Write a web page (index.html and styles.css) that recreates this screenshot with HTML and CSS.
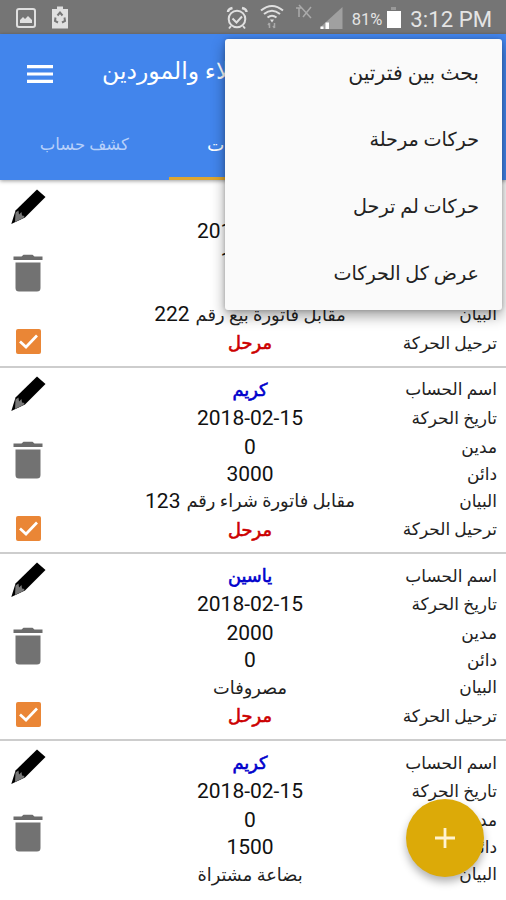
FILE: index.html
```html
<!DOCTYPE html>
<html lang="ar" dir="rtl">
<head>
    <meta charset="UTF-8">
    <meta name="viewport" content="width=device-width, initial-scale=1.0">
    <title>العملاء والموردين</title>
    <link rel="stylesheet" href="styles.css">
</head>
<body>
    <svg class="sprite" width="0" height="0">
        <symbol id="pencil" viewBox="0 0 36 36">
            <path d="M27 0.500l8.500 7.500L15 28.500 1.300 35 5.500 21.500z" fill="#000"/>
            <path d="M5.500 23.500l3-2 .5 4 2.500-2.500.5 3.500 2.500.5-1 2L5 33z" fill="#777"/>
        </symbol>
        <symbol id="trash" viewBox="0 0 30 38">
            <path d="M1 2.500h7.500l2-1.700h9l2 1.700H29.500v3.600H.5V2.500z" fill="#6c6c6c"/>
            <path d="M2.500 8.500h25v25.500a3.500 3.500 0 0 1-3.500 3.500H6A3.500 3.500 0 0 1 2.500 34z" fill="#727272"/>
        </symbol>
        <symbol id="check" viewBox="0 0 25 25">
            <rect width="25" height="25" rx="2" fill="#ea8636"/>
            <path d="M4 12.500l6 5.500L21 6.500" fill="none" stroke="#fff" stroke-width="2.700"/>
        </symbol>
    </svg>

    <div class="status" dir="ltr">
        <svg width="506" height="34" viewBox="0 0 506 34">
            <g fill="none" stroke="#e0e0e0">
                <rect x="17" y="9" width="18" height="18" rx="2" stroke-width="2"/>
                <circle cx="237" cy="19" r="8.300" stroke-width="2"/>
                <path d="M232.500 18.500l4 4 5.500-6M231 26l-2 2.500M243 26l2 2.500" stroke-width="2"/>
                <path d="M228 12q0-3 4.500-4M246.500 12q0-3-4.500-4" stroke-width="2.500"/>
                <path d="M261 10.500q11-9 22 0M264 14q8-6.500 16 0M267.500 17.500q4.500-3.500 9 0" stroke-width="2"/>
            </g>
            <path d="M20 23v-3l3-3 2 2 3-3 4 4v3zM52 9h5V6.500h6V9h5v19.500H52zM270 19.500h4l-2 3z" fill="#e0e0e0"/>
            <path d="M57.500 15.500l2.500-3 2.500 3M64.500 17.500l.5 3.500-3 1.500M55.500 17.500l-.5 3.500 3 1.500" fill="none" stroke="#777" stroke-width="2"/>
            <path d="M269.500 28v-5m-1.500 2l1.500-2m5 0v5m-1.500-2l1.500 2" fill="none" stroke="#aaa" stroke-width="1.500"/>
            <path d="M296 8h6m-3 0v9M299 5l12 13M311 7l-8 10" fill="none" stroke="#aaa" stroke-width="1.500"/>
            <path d="M320.500 29V27l22-20v22z" fill="#a0a0a0"/>
            <path d="M320.500 29v-2.500h3V29zM325.500 29v-6.500h3.500V29z" fill="#fff"/>
            <path d="M391 7h5v3h-5z" fill="#999"/>
            <path d="M387 11h14v17h-14z" fill="#fff"/>
        </svg>
        <span class="battery">81%</span>
        <span class="clock">3:12 PM</span>
    </div>

    <header class="appbar">
        <div class="toolbar">
            <h1>العملاء والموردين</h1>
            <svg class="menu-icon" width="26" height="18" viewBox="0 0 26 18">
                <path d="M0 1.700h26M0 9h26M0 16.300h26" stroke="#fff" stroke-width="3.200"/>
            </svg>
        </div>
        <nav class="tabs">
            <a class="tab">الحسابات</a>
            <a class="tab active">كل الحركات</a>
            <a class="tab">كشف حساب</a>
        </nav>
    </header>

    <main class="list">
        <article class="card">
            <dl>
                <dt>اسم الحساب</dt><dd class="name">كريم</dd>
                <dt>تاريخ الحركة</dt><dd class="num">2018-02-15</dd>
                <dt>مدين</dt><dd class="num">15000</dd>
                <dt>دائن</dt><dd class="num">0</dd>
                <dt>البيان</dt><dd>مقابل فاتورة بيع رقم <span class="num">222</span></dd>
                <dt>ترحيل الحركة</dt><dd class="posted">مرحل</dd>
            </dl>
            <div class="actions">
                <svg class="pencil"><use href="#pencil"/></svg>
                <svg class="trash"><use href="#trash"/></svg>
                <svg class="check"><use href="#check"/></svg>
            </div>
        </article>
        <article class="card">
            <dl>
                <dt>اسم الحساب</dt><dd class="name">كريم</dd>
                <dt>تاريخ الحركة</dt><dd class="num">2018-02-15</dd>
                <dt>مدين</dt><dd class="num">0</dd>
                <dt>دائن</dt><dd class="num">3000</dd>
                <dt>البيان</dt><dd>مقابل فاتورة شراء رقم <span class="num">123</span></dd>
                <dt>ترحيل الحركة</dt><dd class="posted">مرحل</dd>
            </dl>
            <div class="actions">
                <svg class="pencil"><use href="#pencil"/></svg>
                <svg class="trash"><use href="#trash"/></svg>
                <svg class="check"><use href="#check"/></svg>
            </div>
        </article>
        <article class="card">
            <dl>
                <dt>اسم الحساب</dt><dd class="name">ياسين</dd>
                <dt>تاريخ الحركة</dt><dd class="num">2018-02-15</dd>
                <dt>مدين</dt><dd class="num">2000</dd>
                <dt>دائن</dt><dd class="num">0</dd>
                <dt>البيان</dt><dd>مصروفات</dd>
                <dt>ترحيل الحركة</dt><dd class="posted">مرحل</dd>
            </dl>
            <div class="actions">
                <svg class="pencil"><use href="#pencil"/></svg>
                <svg class="trash"><use href="#trash"/></svg>
                <svg class="check"><use href="#check"/></svg>
            </div>
        </article>
        <article class="card">
            <dl>
                <dt>اسم الحساب</dt><dd class="name">كريم</dd>
                <dt>تاريخ الحركة</dt><dd class="num">2018-02-15</dd>
                <dt>مدين</dt><dd class="num">0</dd>
                <dt>دائن</dt><dd class="num">1500</dd>
                <dt>البيان</dt><dd>بضاعة مشتراة</dd>
            </dl>
            <div class="actions">
                <svg class="pencil"><use href="#pencil"/></svg>
                <svg class="trash"><use href="#trash"/></svg>
            </div>
        </article>
    </main>

    <ul class="popup">
        <li class="wide">بحث بين فترتين</li>
        <li>حركات مرحلة</li>
        <li>حركات لم ترحل</li>
        <li>عرض كل الحركات</li>
    </ul>

    <button class="fab" aria-label="إضافة">
        <svg width="20" height="20" viewBox="0 0 20 20">
            <path d="M10 0v20M0 10h20" stroke="#fff3d0" stroke-width="2.800"/>
        </svg>
    </button>
</body>
</html>
```
FILE: styles.css
```css
* {
    box-sizing: border-box;
}
body {
    margin: 0;
    height: 900px;
    position: relative;
    overflow: hidden;
    background: #fff;
    color: #222;
    font-family: Roboto, "DejaVu Sans", sans-serif;
    font-size: 17px;
}
.sprite {
    position: absolute;
}

/* status bar */
.status {
    height: 34px;
    position: relative;
    background: #757575;
    color: #e4e4e4;
    display: flex;
    align-items: center;
    justify-content: flex-end;
    padding: 4px 14px 0 0;
}
.status svg {
    position: absolute;
    left: 0;
    top: 0;
}
.battery {
    font-size: 16.5px;
    margin-right: 28px;
}
.clock {
    font-size: 22.2px;
}

/* header */
.appbar {
    height: 146px;
    position: relative;
    background: #4285ec;
    color: #fff;
    box-shadow: 0 1px 4px rgba(0,0,0,0.4);
}
.toolbar {
    height: 78px;
    display: flex;
    align-items: center;
    justify-content: flex-end;
    gap: 49px;
    padding-left: 27px;
}
.toolbar h1 {
    margin: 0 0 4px;
    font-size: 23.5px;
    font-weight: 400;
    white-space: nowrap;
}
.menu-icon {
    margin-top: 2px;
}
.tabs {
    display: grid;
    grid-template-columns: repeat(3, 1fr);
    height: 68px;
}
.tab {
    display: flex;
    align-items: center;
    justify-content: center;
    font-size: 16.5px;
    color: #b7d0fa;
    border-bottom: 3px solid transparent;
}
.tab.active {
    font-size: 18.5px;
    color: #fff;
    border-color: #dda630;
}

/* transactions */
.list {
    padding-top: 1px;
}
.card {
    height: 186.7px;
    border-bottom: 2px solid #cdcdcd;
    display: flex;
    justify-content: space-between;
    padding: 8px 9px 0 10px;
}
.card:last-child {
    border: 0;
}
dl {
    margin: 0;
    display: grid;
    grid-template-columns: 144px 206px;
    grid-template-rows: 27px 30px 28px 26px 28px 29px;
    align-items: center;
    white-space: nowrap;
}
dd {
    margin: 0;
    display: flex;
    justify-content: center;
    align-items: center;
    gap: 6px;
    font-size: 17.8px;
}
.num {
    font-size: 21px;
    color: #111;
}
.name {
    color: #0000cc;
    -webkit-text-stroke: 0.6px #0000cc;
}
.posted {
    color: #cc0000;
    -webkit-text-stroke: 0.6px #cc0000;
}
.actions {
    width: 36px;
    display: flex;
    flex-direction: column;
    align-items: center;
}
.pencil {
    width: 36px;
    height: 36px;
}
.trash {
    width: 30px;
    height: 38px;
    margin-top: 29px;
}
.check {
    width: 25px;
    height: 25px;
    margin-top: 37px;
}

/* overflow menu */
.popup {
    position: absolute;
    left: 225px;
    top: 39px;
    width: 277px;
    height: 271px;
    margin: 0;
    padding: 0 23px;
    list-style: none;
    background: #fafafa;
    border-radius: 3px;
    box-shadow: 0 6px 14px rgba(0,0,0,0.38), 0 0 4px rgba(0,0,0,0.2);
}
.popup li {
    height: 67px;
    display: flex;
    align-items: center;
    font-size: 19.2px;
}
.popup .wide {
    font-size: 20.4px;
}

.fab {
    position: absolute;
    left: 406px;
    top: 799px;
    width: 78px;
    height: 78px;
    border: 0;
    border-radius: 50%;
    background: #dcaa08;
    box-shadow: 0 5px 8px rgba(0,0,0,0.3);
    display: flex;
    align-items: center;
    justify-content: center;
}
```
